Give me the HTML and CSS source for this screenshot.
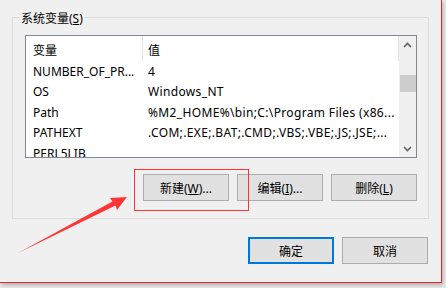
FILE: index.html
```html
<!DOCTYPE html>
<html lang="zh-CN">
  <head>
    <meta charset="UTF-8" />
    <title>环境变量</title>
    <link rel="stylesheet" href="styles.css">
  </head>
  <body>
    <div class="desktop">
      <div class="dialog">
        <fieldset class="group">
          <legend>系统变量(<u>S</u>)</legend>
          <div class="list">
            <div class="list-body">
              <div class="row head">
                <span class="col-name">变量</span>
                <span class="col-value">值</span>
              </div>
              <div class="row">
                <span class="col-name">NUMBER_OF_PR...</span>
                <span class="col-value">4</span>
              </div>
              <div class="row">
                <span class="col-name">OS</span>
                <span class="col-value">Windows_NT</span>
              </div>
              <div class="row">
                <span class="col-name">Path</span>
                <span class="col-value">%M2_HOME%\bin;C:\Program Files (x86...</span>
              </div>
              <div class="row">
                <span class="col-name">PATHEXT</span>
                <span class="col-value">.COM;.EXE;.BAT;.CMD;.VBS;.VBE;.JS;.JSE;...</span>
              </div>
              <div class="row">
                <span class="col-name">PERL5LIB</span>
                <span class="col-value"></span>
              </div>
            </div>
            <div class="scrollbar">
              <span class="scroll-btn">
                <svg width="9" height="6" viewBox="0 0 9 6"><path d="M1 5 L4.5 1.5 L8 5" fill="none" stroke="#606060" stroke-width="1.6"/></svg>
              </span>
              <span class="scroll-track"><span class="thumb"></span></span>
              <span class="scroll-btn">
                <svg width="9" height="6" viewBox="0 0 9 6"><path d="M1 1 L4.5 4.5 L8 1" fill="none" stroke="#606060" stroke-width="1.6"/></svg>
              </span>
            </div>
          </div>
          <div class="actions">
            <button class="btn">新建(<u>W</u>)...</button>
            <button class="btn">编辑(<u>I</u>)...</button>
            <button class="btn">删除(<u>L</u>)</button>
          </div>
        </fieldset>
        <div class="footer">
          <button class="btn default">确定</button>
          <button class="btn">取消</button>
        </div>
      </div>

      <!-- annotation drawn over the screenshot -->
      <div class="highlight"></div>
      <svg class="arrow" width="446" height="288" viewBox="0 0 446 288">
        <polygon points="18,253 112.5,201.5 110,198 127,197 117,210 115.5,205.5" fill="#ff3535"/>
      </svg>
    </div>
  </body>
</html>
```

FILE: styles.css
```css
html,
body {
  margin: 0;
  padding: 0;
}

body {
  width: 446px;
  height: 288px;
  overflow: hidden;
  background-color: #e6e6e6;
  font-family: "Noto Sans", "Noto Sans CJK SC", sans-serif;
  font-size: 12px;
  color: #000;
}

.desktop {
  position: relative;
  width: 446px;
  height: 288px;
  background-color: #e9e9e9;
}

.dialog {
  width: 442px;
  height: 283px;
  box-sizing: border-box;
  padding-top: 7px;
  background-color: #f0f0f0;
  border-right: 1px solid #e2262c;
  border-bottom: 1px solid #e2262c;
  box-shadow: 1px 2px 4px rgba(0, 0, 0, 0.25);
}

.group {
  margin: 0 0 0 12px;
  width: 417px;
  min-width: 0;
  box-sizing: border-box;
  padding: 8px 11px 17px 12px;
  border: 1px solid #dcdcdc;
}

.group legend {
  margin-left: -6px;
  padding: 4px 2px 0;
  line-height: 16px;
}

.list {
  display: flex;
  height: 123px;
  box-sizing: border-box;
  border: 1px solid #828790;
  background-color: #fff;
  overflow: hidden;
}

.list-body {
  flex: 1;
  overflow: hidden;
}

.row {
  display: flex;
  align-items: center;
  height: 20.5px;
  white-space: nowrap;
}

.row.head {
  height: 25px;
}

.col-name {
  width: 117px;
  box-sizing: border-box;
  padding-left: 7px;
  overflow: hidden;
}

.col-value {
  flex: 1;
  padding-left: 5px;
  overflow: hidden;
  letter-spacing: 0.35px;
}

.head span {
  height: 25px;
  line-height: 29px;
  letter-spacing: 0;
  border-right: 1px solid #e5e5e5;
}

.scrollbar {
  display: flex;
  flex-direction: column;
  width: 17px;
  background-color: #f0f0f0;
}

.scroll-btn {
  display: flex;
  justify-content: center;
  align-items: center;
  height: 17px;
}

.scroll-track {
  flex: 1;
  padding-top: 22px;
}

.thumb {
  display: block;
  height: 17px;
  margin: 0 0 0 1px;
  background-color: #cdcdcd;
}

.actions {
  display: flex;
  justify-content: flex-end;
  gap: 8px;
  margin-top: 16px;
}

.btn {
  width: 86px;
  height: 27px;
  box-sizing: border-box;
  padding: 0;
  border: 1px solid #adadad;
  background-color: #e1e1e1;
  font-family: inherit;
  font-size: 12px;
  color: #000;
}

.btn.default {
  border: 2px solid #0078d7;
}

.footer {
  display: flex;
  justify-content: flex-end;
  gap: 8px;
  margin-top: 18px;
  padding-right: 13px;
}

.highlight {
  position: absolute;
  left: 134px;
  top: 169px;
  width: 115px;
  height: 42px;
  box-sizing: border-box;
  border: 1px solid #ff3535;
}

.arrow {
  position: absolute;
  left: 0;
  top: 0;
}
```
